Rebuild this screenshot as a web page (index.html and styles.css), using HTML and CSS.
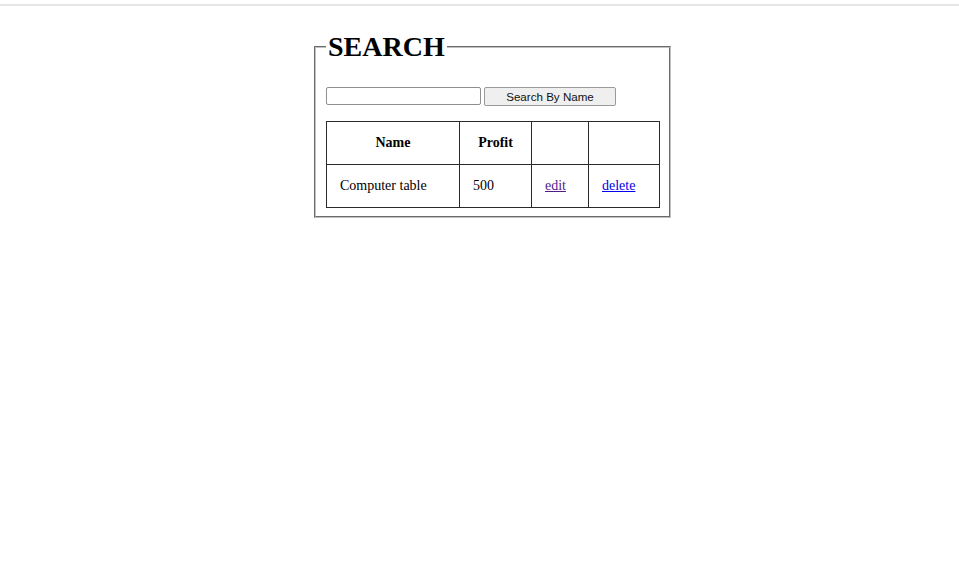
FILE: index.html
```html
<!DOCTYPE html>
<html>
<head>
<meta charset="utf-8">
<link rel="stylesheet" href="styles.css">
</head>
<body>
<div class="topline"></div>
<main class="page">
  <fieldset class="search">
    <legend class="search-title">SEARCH</legend>
    <form class="search-row">
      <input class="search-input" type="text">
      <button class="search-btn" type="button">Search By Name</button>
    </form>
    <table class="results">
      <colgroup>
        <col class="c1"><col class="c2"><col class="c3"><col class="c4">
      </colgroup>
      <thead>
        <tr><th>Name</th><th>Profit</th><th></th><th></th></tr>
      </thead>
      <tbody>
        <tr>
          <td>Computer table</td>
          <td>500</td>
          <td><a class="visited" href="#">edit</a></td>
          <td><a class="link" href="#">delete</a></td>
        </tr>
      </tbody>
    </table>
  </fieldset>
</main>
</body>
</html>
```
FILE: styles.css
```css
html, body {
  margin: 0;
  padding: 0;
  background: #ffffff;
}
body {
  font-family: "Liberation Serif", "Times New Roman", serif;
  color: #000;
}
.topline {
  margin-top: 4px;
  height: 2px;
  background: #e6e6e6;
}
.page {
  padding: 25px 0 0 314px;
}
.search {
  box-sizing: border-box;
  width: 357px;
  margin: 0;
  padding: 0 9px 8px 10px;
  border: 2px groove #c0c0c0;
  min-width: 0;
}
.search-title {
  font-size: 28px;
  font-weight: bold;
  line-height: 32px;
  padding: 0 2px;
  margin: 0;
}
.search-row {
  display: flex;
  align-items: flex-start;
  gap: 3px;
  margin: 24px 0 0 0;
}
.search-input {
  box-sizing: border-box;
  width: 155px;
  height: 18px;
  margin: 0;
  border: 1px solid #8f8f8f;
  border-radius: 2px;
  padding: 0 2px;
  background: #fff;
}
.search-btn {
  box-sizing: border-box;
  width: 132px;
  height: 19px;
  margin: 0;
  padding: 0;
  border: 1px solid #9a9a9a;
  border-radius: 2px;
  background: #efefef;
  font-family: "Liberation Sans", Arial, sans-serif;
  font-size: 11.6px;
  color: #111;
  line-height: 17px;
}
.results {
  margin-top: 15px;
  width: 333px;
  table-layout: fixed;
  border-collapse: collapse;
  font-size: 14px;
}
.c1 { width: 133px; }
.c2 { width: 72px; }
.c3 { width: 57px; }
.c4 { width: 71px; }
.results th,
.results td {
  border: 1px solid #2a2a2a;
  padding: 13px;
  line-height: 16px;
  height: 16px;
}
.results th {
  text-align: center;
  font-weight: bold;
}
.results td {
  text-align: left;
}
.visited { color: #551a8b; }
.link { color: #0000ee; }
```
